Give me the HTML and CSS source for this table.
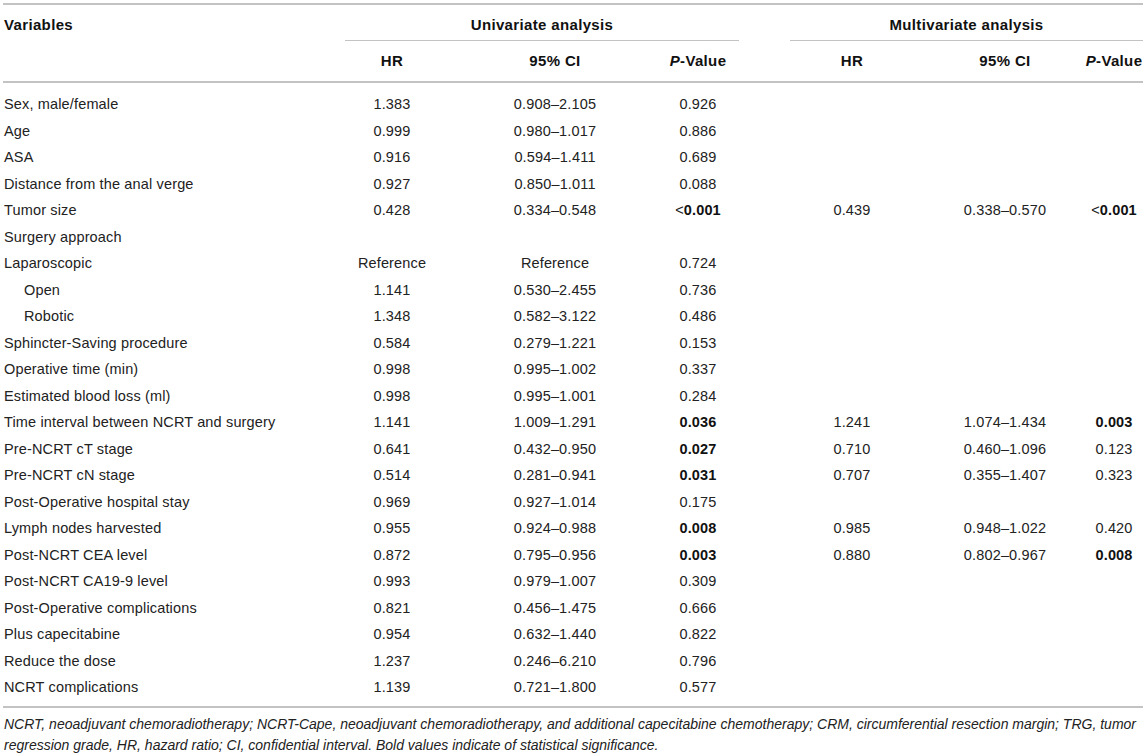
FILE: index.html
```html
<!DOCTYPE html>
<html>
<head>
<meta charset="utf-8">
<link rel="stylesheet" href="styles.css">
</head>
<body>
<div class="table">
  <div class="head">
    <div class="cell var h1">Variables</div>
    <div class="cell group uni">Univariate analysis</div>
    <div class="cell group multi">Multivariate analysis</div>
    <div class="cell c-hr1 h2">HR</div>
    <div class="cell c-ci1 h2">95% CI</div>
    <div class="cell c-p1 h2"><i>P</i>-Value</div>
    <div class="cell c-hr2 h2">HR</div>
    <div class="cell c-ci2 h2">95% CI</div>
    <div class="cell c-p2 h2"><i>P</i>-Value</div>
  </div>
  <div class="body">
    <div class="row"><div class="cell var">Sex, male/female</div><div class="cell c-hr1">1.383</div><div class="cell c-ci1">0.908–2.105</div><div class="cell c-p1">0.926</div></div>
    <div class="row"><div class="cell var">Age</div><div class="cell c-hr1">0.999</div><div class="cell c-ci1">0.980–1.017</div><div class="cell c-p1">0.886</div></div>
    <div class="row"><div class="cell var">ASA</div><div class="cell c-hr1">0.916</div><div class="cell c-ci1">0.594–1.411</div><div class="cell c-p1">0.689</div></div>
    <div class="row"><div class="cell var">Distance from the anal verge</div><div class="cell c-hr1">0.927</div><div class="cell c-ci1">0.850–1.011</div><div class="cell c-p1">0.088</div></div>
    <div class="row"><div class="cell var">Tumor size</div><div class="cell c-hr1">0.428</div><div class="cell c-ci1">0.334–0.548</div><div class="cell c-p1"><span class="lt">&lt;</span><b>0.001</b></div><div class="cell c-hr2">0.439</div><div class="cell c-ci2">0.338–0.570</div><div class="cell c-p2"><span class="lt">&lt;</span><b>0.001</b></div></div>
    <div class="row"><div class="cell var">Surgery approach</div></div>
    <div class="row"><div class="cell var">Laparoscopic</div><div class="cell c-hr1">Reference</div><div class="cell c-ci1">Reference</div><div class="cell c-p1">0.724</div></div>
    <div class="row"><div class="cell var indent">Open</div><div class="cell c-hr1">1.141</div><div class="cell c-ci1">0.530–2.455</div><div class="cell c-p1">0.736</div></div>
    <div class="row"><div class="cell var indent">Robotic</div><div class="cell c-hr1">1.348</div><div class="cell c-ci1">0.582–3.122</div><div class="cell c-p1">0.486</div></div>
    <div class="row"><div class="cell var">Sphincter-Saving procedure</div><div class="cell c-hr1">0.584</div><div class="cell c-ci1">0.279–1.221</div><div class="cell c-p1">0.153</div></div>
    <div class="row"><div class="cell var">Operative time (min)</div><div class="cell c-hr1">0.998</div><div class="cell c-ci1">0.995–1.002</div><div class="cell c-p1">0.337</div></div>
    <div class="row"><div class="cell var">Estimated blood loss (ml)</div><div class="cell c-hr1">0.998</div><div class="cell c-ci1">0.995–1.001</div><div class="cell c-p1">0.284</div></div>
    <div class="row"><div class="cell var">Time interval between NCRT and surgery</div><div class="cell c-hr1">1.141</div><div class="cell c-ci1">1.009–1.291</div><div class="cell c-p1"><b>0.036</b></div><div class="cell c-hr2">1.241</div><div class="cell c-ci2">1.074–1.434</div><div class="cell c-p2"><b>0.003</b></div></div>
    <div class="row"><div class="cell var">Pre-NCRT cT stage</div><div class="cell c-hr1">0.641</div><div class="cell c-ci1">0.432–0.950</div><div class="cell c-p1"><b>0.027</b></div><div class="cell c-hr2">0.710</div><div class="cell c-ci2">0.460–1.096</div><div class="cell c-p2">0.123</div></div>
    <div class="row"><div class="cell var">Pre-NCRT cN stage</div><div class="cell c-hr1">0.514</div><div class="cell c-ci1">0.281–0.941</div><div class="cell c-p1"><b>0.031</b></div><div class="cell c-hr2">0.707</div><div class="cell c-ci2">0.355–1.407</div><div class="cell c-p2">0.323</div></div>
    <div class="row"><div class="cell var">Post-Operative hospital stay</div><div class="cell c-hr1">0.969</div><div class="cell c-ci1">0.927–1.014</div><div class="cell c-p1">0.175</div></div>
    <div class="row"><div class="cell var">Lymph nodes harvested</div><div class="cell c-hr1">0.955</div><div class="cell c-ci1">0.924–0.988</div><div class="cell c-p1"><b>0.008</b></div><div class="cell c-hr2">0.985</div><div class="cell c-ci2">0.948–1.022</div><div class="cell c-p2">0.420</div></div>
    <div class="row"><div class="cell var">Post-NCRT CEA level</div><div class="cell c-hr1">0.872</div><div class="cell c-ci1">0.795–0.956</div><div class="cell c-p1"><b>0.003</b></div><div class="cell c-hr2">0.880</div><div class="cell c-ci2">0.802–0.967</div><div class="cell c-p2"><b>0.008</b></div></div>
    <div class="row"><div class="cell var">Post-NCRT CA19-9 level</div><div class="cell c-hr1">0.993</div><div class="cell c-ci1">0.979–1.007</div><div class="cell c-p1">0.309</div></div>
    <div class="row"><div class="cell var">Post-Operative complications</div><div class="cell c-hr1">0.821</div><div class="cell c-ci1">0.456–1.475</div><div class="cell c-p1">0.666</div></div>
    <div class="row"><div class="cell var">Plus capecitabine</div><div class="cell c-hr1">0.954</div><div class="cell c-ci1">0.632–1.440</div><div class="cell c-p1">0.822</div></div>
    <div class="row"><div class="cell var">Reduce the dose</div><div class="cell c-hr1">1.237</div><div class="cell c-ci1">0.246–6.210</div><div class="cell c-p1">0.796</div></div>
    <div class="row"><div class="cell var">NCRT complications</div><div class="cell c-hr1">1.139</div><div class="cell c-ci1">0.721–1.800</div><div class="cell c-p1">0.577</div></div>
  </div>
  <p class="note">NCRT, neoadjuvant chemoradiotherapy; NCRT-Cape, neoadjuvant chemoradiotherapy, and additional capecitabine chemotherapy; CRM, circumferential resection margin; TRG, tumor regression grade, HR, hazard ratio; CI, confidential interval. Bold values indicate of statistical significance.</p>
</div>
</body>
</html>
```

FILE: styles.css
```css
:root {
  --cols: 342px 94px 232px 54px 14px 51px 124px 182px 36px 11px;
  --rule: #c3c3c3;
}

body {
  margin: 0;
  background: #ffffff;
  font-family: "Liberation Sans", Arial, sans-serif;
  font-size: 14.5px;
  letter-spacing: 0.15px;
  color: #222222;
}

.table {
  margin: 3px 3px 0 3px;
  width: 1140px;
  border-top: 2px solid var(--rule);
}

.cell {
  display: flex;
  justify-content: center;
  align-items: center;
  white-space: nowrap;
  line-height: 20px;
}

.cell.var {
  grid-column: 1;
  justify-content: flex-start;
  padding-left: 1px;
}

.cell.indent {
  padding-left: 21px;
}

.c-hr1 { grid-column: 2; }
.c-ci1 { grid-column: 3; }
.c-p1 { grid-column: 4; }
.c-hr2 { grid-column: 7; }
.c-ci2 { grid-column: 8; }
.c-p2 { grid-column: 9; }

.head {
  display: grid;
  grid-template-columns: var(--cols);
  grid-template-rows: 36px 40px;
  border-bottom: 2px solid var(--rule);
  font-weight: bold;
  font-size: 15px;
  letter-spacing: 0.35px;
  color: #111111;
}

.h1 {
  grid-row: 1;
  align-items: flex-start;
  padding-top: 10px;
}

.h2 {
  grid-row: 2;
}

.group {
  grid-row: 1;
  align-items: flex-start;
  padding-top: 10px;
  border-bottom: 1px solid var(--rule);
}

.group.uni { grid-column: 2 / span 4; }
.group.multi { grid-column: 7 / span 4; }

.body {
  padding: 8px 0 5.5px;
  border-bottom: 2px solid var(--rule);
}

.row {
  display: grid;
  grid-template-columns: var(--cols);
  height: 26.5px;
}

.row b {
  font-weight: bold;
  color: #111111;
}

.lt {
  font-weight: normal;
}

.note {
  margin: 0;
  padding: 5.5px 0 0 1px;
  font-style: italic;
  font-size: 14px;
  letter-spacing: 0;
  line-height: 21px;
  color: #222222;
}
```
